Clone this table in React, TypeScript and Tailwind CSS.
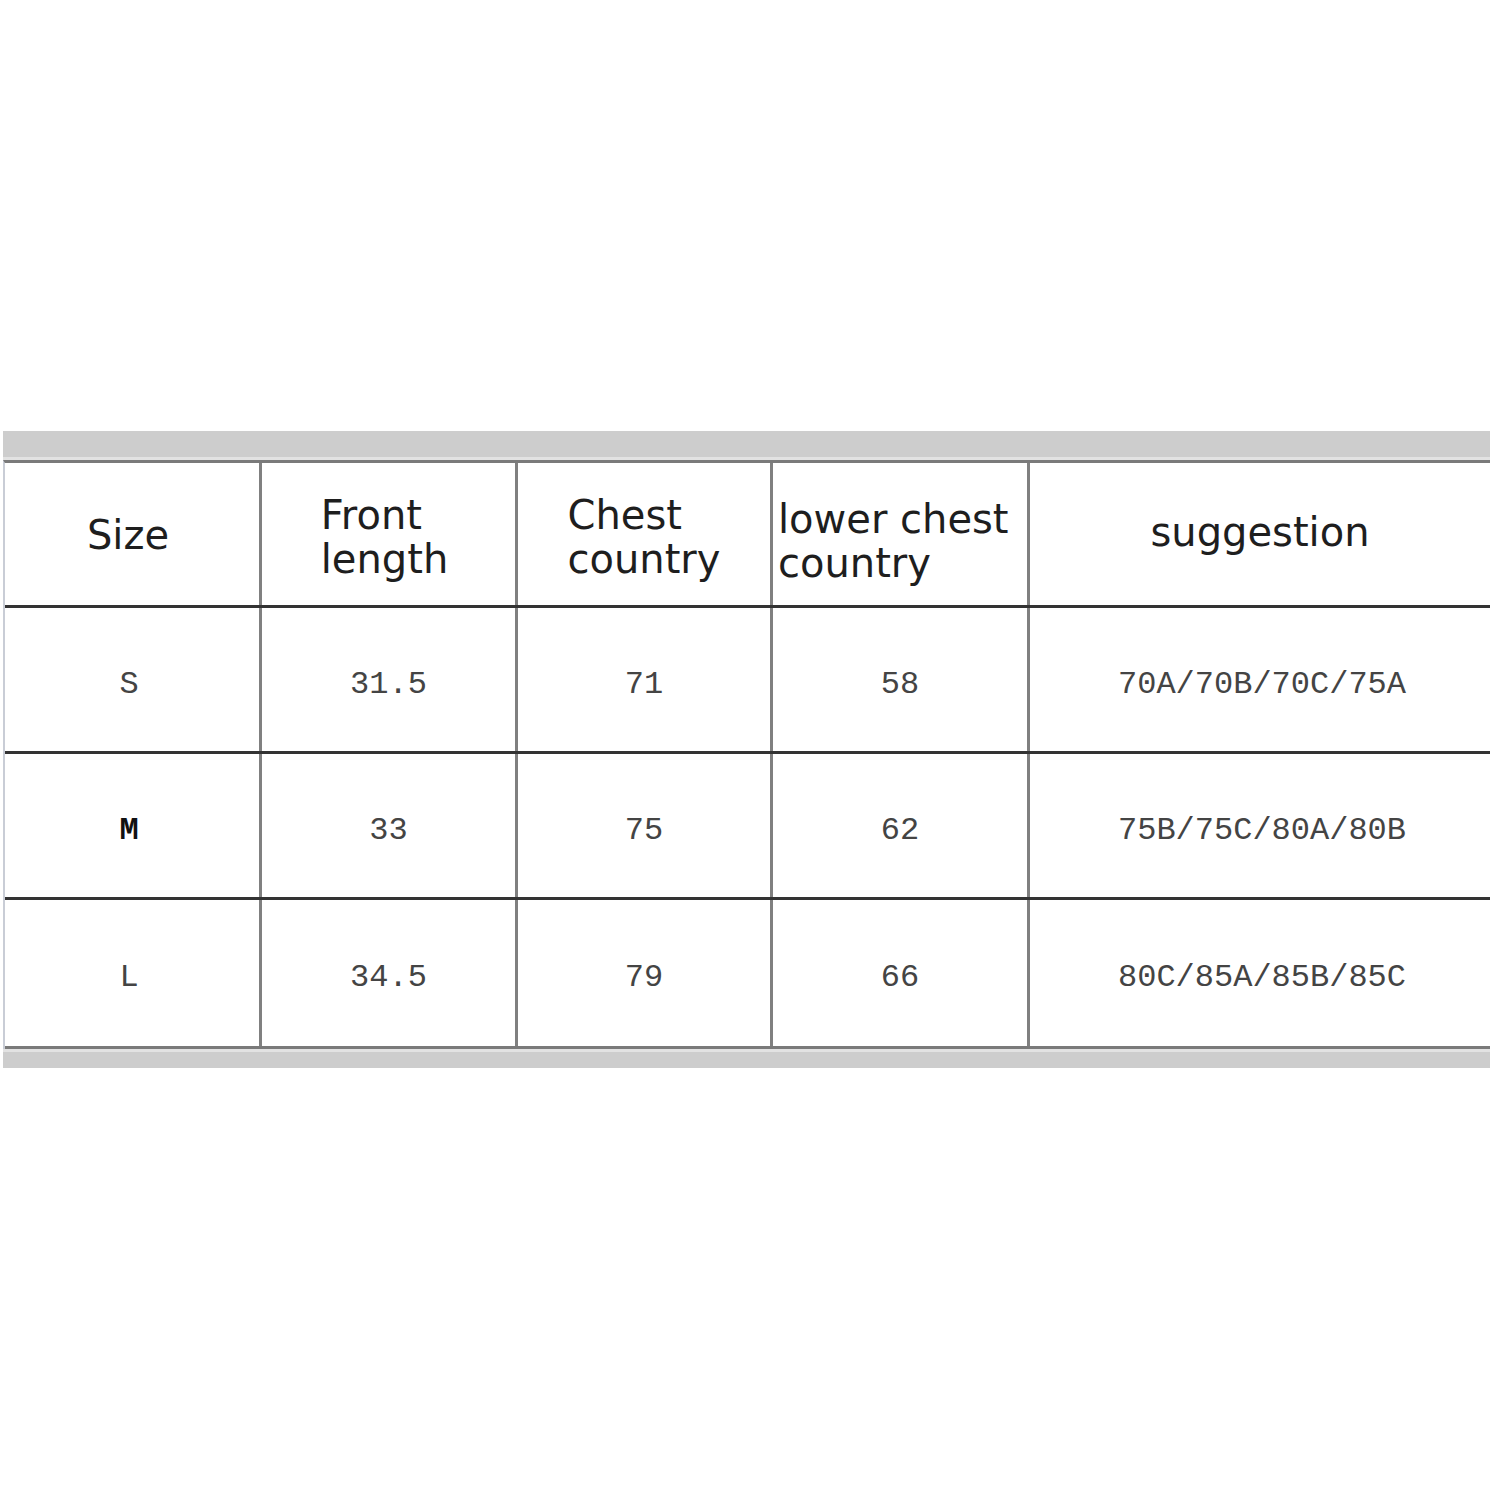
export default function App() {
    const head = "flex items-center h-full border-r-[3px] border-[#808080] text-[40px] leading-[44px] text-[#1e1e1e]";
    const cell = "flex items-center justify-center pt-[10px] border-r-[3px] border-[#808080] text-[32px] text-[#444]";
    const rows = [
        { size: "S", front: "31.5", chest: "71", lower: "58", suggestion: "70A/70B/70C/75A", h: "h-[146px]" },
        { size: "M", front: "33", chest: "75", lower: "62", suggestion: "75B/75C/80A/80B", h: "h-[146px]" },
        { size: "L", front: "34.5", chest: "79", lower: "66", suggestion: "80C/85A/85B/85C", h: "h-[149px]" },
    ];

    return (
        <div className="w-[1500px] h-[1500px] bg-white pt-[431px] pl-[3px]">
            <div className="w-[1487px] flex flex-col">
                {/* top band */}
                <div className="h-[26px] bg-[#cdcdcd]" />
                <div className="h-[3px] bg-[#e2e2e2]" />

                {/* table */}
                <div className="border-t-[3px] border-l-[2px] border-t-[#7a7a7a] border-l-[#c9cdd6] bg-white" style={{ fontFamily: '"DejaVu Sans", sans-serif' }}>
                    {/* Header */}
                    <div className="grid grid-cols-[257px_256px_255px_257px_1fr] h-[145px] border-b-[3px] border-[#333]">
                        <div className={head + " justify-center"}>
                            <span className="-ml-[8px] mt-[2px]">Size</span>
                        </div>
                        <div className={head + " justify-center"}>
                            <div className="text-left -ml-[8px] mt-[6px]">Front<br />length</div>
                        </div>
                        <div className={head + " justify-center"}>
                            <div className="text-left mt-[6px]">Chest<br />country</div>
                        </div>
                        <div className={head + " justify-start pl-[5px]"}>
                            <div className="text-left mt-[14px]">lower chest<br />country</div>
                        </div>
                        <div className="flex items-center justify-center text-[40px] leading-[44px] text-[#1e1e1e]">
                            <span className="-mt-[4px]">suggestion</span>
                        </div>
                    </div>

                    {/* Body */}
                    {rows.map((r, i) => (
                        <div
                            key={r.size}
                            className={"grid grid-cols-[257px_256px_255px_257px_1fr] " + r.h + (i < rows.length - 1 ? " border-b-[3px] border-[#333]" : " border-b-[3px] border-[#7a7a7a]")}
                            style={{ fontFamily: '"Liberation Mono", monospace' }}
                        >
                            <div className={cell}>
                                <span className={"-ml-[6px] " + (r.size === "M" ? "text-[#111] font-bold" : "")}>{r.size}</span>
                            </div>
                            <div className={cell}>{r.front}</div>
                            <div className={cell}>{r.chest}</div>
                            <div className={cell}>{r.lower}</div>
                            <div className="flex items-center justify-center pt-[10px] text-[32px] text-[#444]">
                                <span className="ml-[4px]">{r.suggestion}</span>
                            </div>
                        </div>
                    ))}
                </div>

                {/* bottom band */}
                <div className="h-[3px] bg-[#e2e2e2]" />
                <div className="h-[16px] bg-[#cdcdcd]" />
            </div>
        </div>
    );
}
